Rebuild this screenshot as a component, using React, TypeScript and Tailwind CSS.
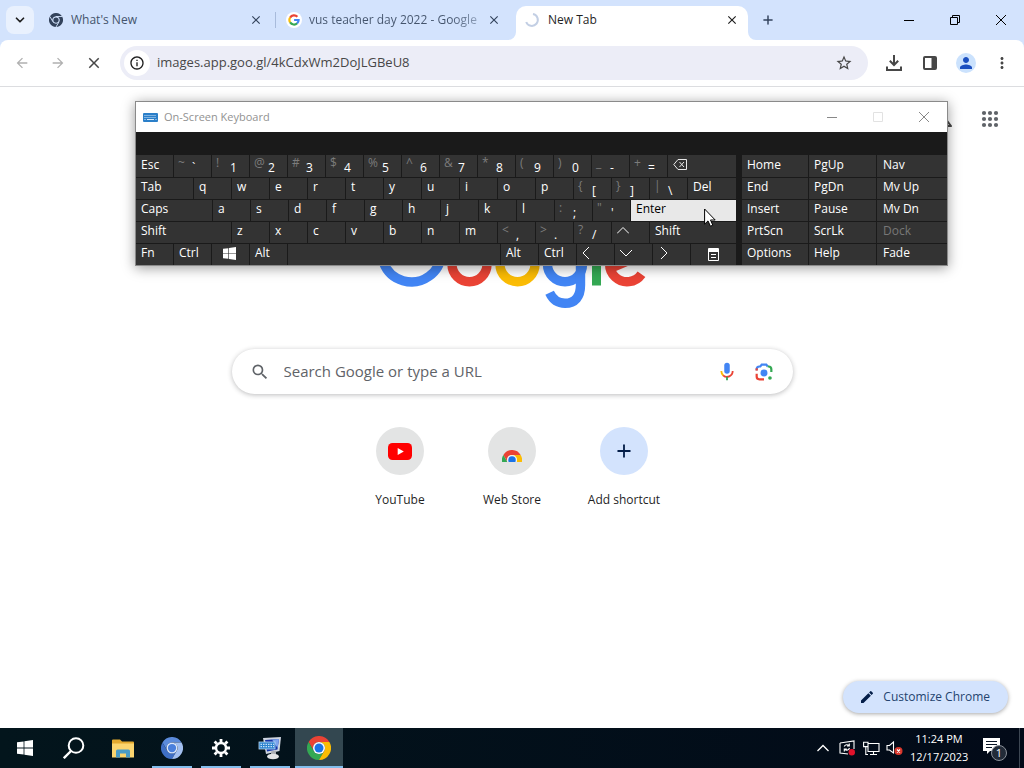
import type { ReactNode } from "react";
import {
  MdArrowBack,
  MdArrowForward,
  MdClose,
  MdEdit,
  MdMoreVert,
  MdOutlineInfo,
  MdOutlineScience,
  MdPerson,
  MdSearch,
  MdStarBorder,
} from "react-icons/md";
import { ChevronDown, Plus } from "lucide-react";

// ─── LOGOS ────────────────────────────────────────────────────────────────

type Ring = { a: string; b: string; c: string; ring: string; dot: string };

const chromeColors: Ring = { a: "#ea4335", b: "#34a853", c: "#fbbc04", ring: "#ffffff", dot: "#1a73e8" };
const chromiumColors: Ring = { a: "#5b8bdb", b: "#3f6fc4", c: "#a3c0f0", ring: "#dce8fb", dot: "#4a80dc" };
const monoColors: Ring = { a: "#33435c", b: "#33435c", c: "#33435c", ring: "#d3e3fd", dot: "#33435c" };

function ChromeMark({ colors, className, split }: { colors: Ring; className: string; split?: boolean }) {
  return (
    <svg viewBox="0 0 48 48" className={className} aria-hidden="true">
      <path d="M24 12H44.8A24 24 0 0 0 3.2 12L13.6 30A12 12 0 0 1 24 12Z" fill={colors.a} />
      <path d="M13.6 30 3.2 12A24 24 0 0 0 24 48L34.4 30A12 12 0 0 1 13.6 30Z" fill={colors.b} />
      <path d="M34.4 30 24 48A24 24 0 0 0 44.8 12H24A12 12 0 0 1 34.4 30Z" fill={colors.c} />
      {split && <path d="M24 12H45M13.6 30 3 12M34.4 30 24 48" stroke={colors.ring} strokeWidth="3" />}
      <circle cx="24" cy="24" r="12" fill={colors.ring} />
      <circle cx="24" cy="24" r="9" fill={colors.dot} />
    </svg>
  );
}

function GoogleG() {
  return (
    <svg viewBox="0 0 24 24" className="size-3" fill="none" strokeWidth="4.4" aria-hidden="true">
      <path d="M4.2 7.2A9.4 9.4 0 0 1 18.8 5.6" stroke="#ea4335" />
      <path d="M4.2 16.8A9.4 9.4 0 0 1 4.2 7.2" stroke="#fbbc04" />
      <path d="M18.4 18.6A9.4 9.4 0 0 1 4.2 16.8" stroke="#34a853" />
      <path d="M12.2 12H21.2A9.4 9.4 0 0 1 18.2 18.8" stroke="#4285f4" />
    </svg>
  );
}

function GoogleLogo() {
  return (
    <svg viewBox="0 0 272 92" className="h-[92px] w-[272px]" fill="none" strokeWidth="9.4" role="img" aria-label="Google">
      <path d="M57 14A30 30 0 1 0 65.5 36H35.5" stroke="#4285f4" />
      <circle cx="93.5" cy="47.2" r="17.5" stroke="#ea4335" />
      <circle cx="141.5" cy="47.2" r="17.5" stroke="#fbbc05" />
      <circle cx="189" cy="47.2" r="17.5" stroke="#4285f4" />
      <path d="M173.6 75.8C177 83 183 86.3 189 86.3C199 86.3 204.5 80 204.5 68V26" stroke="#4285f4" />
      <rect x="216" y="3" width="9" height="65.5" fill="#34a853" />
      <path d="M265.5 57.2A17.5 17.5 0 1 1 266 38L234 51.5" stroke="#ea4335" />
    </svg>
  );
}

function WindowsMark({ className }: { className: string }) {
  return (
    <svg viewBox="0 0 16 16" className={className} fill="currentColor" aria-hidden="true">
      <path d="M0 2.3 6.6 1.4V7.6H0ZM7.4 1.3 16 0V7.6H7.4ZM0 8.4H6.6V14.6L0 13.7ZM7.4 8.4H16V16L7.4 14.7Z" />
    </svg>
  );
}

// ─── TAB STRIP ────────────────────────────────────────────────────────────

function TabClose({ label, dark }: { label: string; dark?: boolean }) {
  return (
    <button aria-label={label} className="flex size-4 shrink-0 items-center justify-center">
      <MdClose className={dark ? "size-3.5 text-[#1f1f1f]" : "size-3.5 text-[#33435c]"} />
    </button>
  );
}

function TabStrip() {
  return (
    <div className="flex h-10 bg-[#d3e3fd] text-[12px] text-[#44546c]">
      <div className="w-10 shrink-0 p-1.5">
        <button aria-label="Search tabs" className="flex size-7 items-center justify-center rounded-lg bg-[#e9f1fe] text-[#1f1f1f]">
          <ChevronDown className="size-3.5" strokeWidth={3} />
        </button>
      </div>
      <div className="flex w-[235px] items-center pr-[11px] pl-[9px]">
        <ChromeMark colors={monoColors} className="mr-2 size-3.5 shrink-0" split />
        <span className="flex-1 truncate">What's New</span>
        <TabClose label="Close What's New" />
      </div>
      <div className="my-3 w-px bg-[#a8bbdb]" />
      <div className="flex w-[240px] items-center pr-[14px] pl-2.5">
        <span className="mr-[7px] flex size-4 shrink-0 items-center justify-center rounded-full bg-white">
          <GoogleG />
        </span>
        <span className="flex-1 bg-linear-to-r from-[#44546c] from-80% to-[#a9bad6] bg-clip-text whitespace-nowrap text-transparent">
          vus teacher day 2022 - Google
        </span>
        <TabClose label="Close vus teacher day 2022" />
      </div>
      <div className="relative mt-1.5 flex w-[232px] items-center rounded-t-[10px] bg-white px-2 pb-1.5 text-[#1f1f1f]">
        <svg viewBox="0 0 8 8" className="absolute bottom-0 -left-2 size-2" fill="#fff">
          <path d="M8 0V8H0A8 8 0 0 0 8 0Z" />
        </svg>
        <svg viewBox="0 0 8 8" className="absolute -right-2 bottom-0 size-2" fill="#fff">
          <path d="M0 0V8H8A8 8 0 0 1 0 0Z" />
        </svg>
        <svg viewBox="0 0 16 16" className="mr-2 size-4 shrink-0" fill="none" stroke="#c3cfe4" strokeWidth="2">
          <path d="M9 2A6 6 0 1 1 2.2 10" />
        </svg>
        <span className="flex-1">New Tab</span>
        <TabClose label="Close New Tab" dark />
      </div>
      <button aria-label="New tab" className="ml-3 flex w-4 items-center justify-center text-[#33435c]">
        <Plus className="size-3.5" strokeWidth={2.5} />
      </button>
      <div className="ml-auto flex text-black">
        <button aria-label="Minimize" className="flex w-[46px] items-center justify-center">
          <svg viewBox="0 0 10 10" className="size-2.5" stroke="currentColor"><path d="M0 5.5H10" /></svg>
        </button>
        <button aria-label="Restore" className="flex w-[46px] items-center justify-center">
          <svg viewBox="0 0 10 10" className="size-2.5" fill="none" stroke="currentColor"><path d="M.5 2.5H7.5V9.5H.5ZM2.5 2.5V.5H9.5V7.5H7.5" /></svg>
        </button>
        <button aria-label="Close window" className="flex w-[46px] items-center justify-center">
          <svg viewBox="0 0 10 10" className="size-2.5" stroke="currentColor"><path d="M0 0 10 10M10 0 0 10" /></svg>
        </button>
      </div>
    </div>
  );
}

function Toolbar() {
  return (
    <div className="bg-[#d3e3fd]">
      <div className="flex h-[47px] items-center rounded-t-lg border-b border-[#dcdde0] bg-white pr-1 pl-1 text-[#474747]">
        <button aria-label="Back" className="flex w-9 justify-center text-[#b0b0b0]"><MdArrowBack className="size-4" /></button>
        <button aria-label="Forward" className="flex w-9 justify-center text-[#b0b0b0]"><MdArrowForward className="size-4" /></button>
        <button aria-label="Stop loading" className="flex w-9 justify-center"><MdClose className="size-[18px]" /></button>
        <div className="ml-2 flex h-[34px] flex-1 items-center rounded-full bg-[#ecedf7] pr-[15px] pl-1">
          <button aria-label="View site information" className="flex size-[26px] items-center justify-center rounded-full bg-white">
            <MdOutlineInfo className="size-4 text-[#1f1f1f]" />
          </button>
          <input
            aria-label="Address"
            defaultValue="images.app.goo.gl/4kCdxWm2DoJLGBeU8"
            className="ml-[7px] min-w-0 flex-1 bg-transparent text-[13px] text-[#474747] outline-none"
          />
          <button aria-label="Bookmark this tab"><MdStarBorder className="size-[18px]" /></button>
        </div>
        <button aria-label="Downloads" className="ml-2 flex w-9 justify-center">
          <svg viewBox="0 0 18 18" className="size-[18px]" fill="none" stroke="currentColor" strokeWidth="2">
            <path d="M9 1V10.5M4.8 6.8 9 11 13.2 6.8M2 12.5V16H16V12.5" />
          </svg>
        </button>
        <button aria-label="Side panel" className="flex w-9 justify-center">
          <svg viewBox="0 0 16 16" className="size-4" fill="none" stroke="currentColor" strokeWidth="2">
            <rect x="2" y="2" width="12" height="12" rx="1" /><path d="M9.5 2H14V14H9.5Z" fill="currentColor" stroke="none" />
          </svg>
        </button>
        <button aria-label="Profile" className="flex w-9 justify-center">
          <span className="flex size-5 items-center justify-center rounded-full bg-[#cbe2fd]"><MdPerson className="size-[18px] text-[#1b4fc0]" /></span>
        </button>
        <button aria-label="Menu" className="flex w-9 justify-center"><MdMoreVert className="size-[18px]" /></button>
      </div>
    </div>
  );
}

// ─── NEW TAB PAGE ─────────────────────────────────────────────────────────

function MicIcon() {
  return (
    <svg viewBox="0 0 24 24" className="size-[22px]" fill="none" aria-hidden="true">
      <rect x="9" y="2" width="6" height="12" rx="3" fill="#4285f4" />
      <path d="M5.8 11A6.2 6.2 0 0 0 8 15.8" stroke="#fbbc04" strokeWidth="2" />
      <path d="M7.8 15.6A6.2 6.2 0 0 0 18.2 11" stroke="#ea4335" strokeWidth="2" />
      <path d="M12 17.2V21" stroke="#34a853" strokeWidth="2" />
    </svg>
  );
}

function LensIcon() {
  return (
    <svg viewBox="0 0 24 24" className="size-[22px]" fill="none" strokeWidth="2.4" aria-hidden="true">
      <path d="M4 10V9Q4 6 7 6H8L9.5 4H14.5L16 6" stroke="#4285f4" />
      <path d="M16 6H17Q20 6 20 9V12" stroke="#34a853" />
      <path d="M4 8V10.5" stroke="#ea4335" />
      <path d="M4 14V17Q4 20 7 20H12" stroke="#ea4335" />
      <circle cx="12" cy="13" r="3.8" fill="#4285f4" />
      <circle cx="18.5" cy="18.5" r="2" fill="#34a853" />
    </svg>
  );
}

function Shortcut({ label, tint, children }: { label: string; tint: string; children: ReactNode }) {
  return (
    <a href="#" className="flex w-28 flex-col items-center gap-4 text-[12px] leading-[18px] text-[#1f1f1f]">
      <span className={`flex size-12 items-center justify-center rounded-full ${tint}`}>{children}</span>
      {label}
    </a>
  );
}

function NewTabPage() {
  return (
    <main className="relative flex flex-1 flex-col items-center bg-white">
      <div className="flex w-full items-center justify-end gap-[26px] pt-5 pr-[25px] text-[#474747]">
        <MdOutlineScience className="size-6" />
        <button aria-label="Google apps">
          <svg viewBox="0 0 18 18" className="size-[18px]" fill="#5f6368">
            {[3, 9, 15].map((y) => [3, 9, 15].map((x) => <circle key={`${x}-${y}`} cx={x} cy={y} r="2.1" />))}
          </svg>
        </button>
      </div>
      <div className="mt-[86px]">
        <GoogleLogo />
      </div>
      <form className="mt-10 flex h-[45px] w-full max-w-[561px] items-center rounded-full bg-white px-[18px] shadow-[0_1px_5px_rgba(32,33,36,0.3)]">
        <MdSearch className="size-5 text-[#5f6368]" />
        <input
          aria-label="Search"
          placeholder="Search Google or type a URL"
          className="ml-3.5 min-w-0 flex-1 text-[15px] outline-none placeholder:text-[#5f6368]"
        />
        <button type="button" aria-label="Search by voice"><MicIcon /></button>
        <button type="button" aria-label="Search by image" className="ml-[15px]"><LensIcon /></button>
      </form>
      <div className="mt-[33px] flex">
        <Shortcut label="YouTube" tint="bg-[#e3e4e4]">
          <svg viewBox="0 0 24 17" className="w-6">
            <rect width="24" height="17" rx="4.5" fill="#f00" />
            <path d="M9.7 5V12L15.8 8.5Z" fill="#fff" />
          </svg>
        </Shortcut>
        <Shortcut label="Web Store" tint="bg-[#e3e4e4]">
          <span className="mt-2.5 h-3 w-5 overflow-hidden">
            <ChromeMark colors={{ ...chromeColors, ring: "#f1f1f1" }} className="size-5" />
          </span>
        </Shortcut>
        <Shortcut label="Add shortcut" tint="bg-[#d3e3fd]">
          <Plus className="size-5 text-[#041e49]" strokeWidth={2.2} />
        </Shortcut>
      </div>
      <div className="mt-auto flex w-full justify-end pr-4 pb-[15px]">
        <button className="flex h-8 items-center gap-2 rounded-full bg-[#d3e3fd] pr-[18px] pl-4 text-[12px] text-[#24436f] shadow-[0_1px_4px_rgba(0,0,0,0.35)]">
          <MdEdit className="size-4 text-[#041e49]" />
          Customize Chrome
        </button>
      </div>
    </main>
  );
}

// ─── ON-SCREEN KEYBOARD ───────────────────────────────────────────────────

const keyBase = "flex h-full items-center bg-[#333333] pl-[5px] text-left leading-4";

function Key({ children, width = "w-[37px]", label }: { children?: ReactNode; width?: string; label?: string }) {
  return (
    <button aria-label={label} className={`${keyBase} ${width} pb-[3px]`}>
      {children}
    </button>
  );
}

// Keys with a shifted symbol in the upper left corner
function DualKey({ pair }: { pair: string }) {
  return (
    <button className="flex h-full w-[37px] bg-[#333333] pl-1 text-left leading-4">
      <span className="w-3.5 text-[#7c7c7c]">{pair[0]}</span>
      <span className="pt-[5px]">{pair[1]}</span>
    </button>
  );
}

function Letters({ text }: { text: string }) {
  return (
    <>
      {text.split("").map((c) => (
        <Key key={c}>{c}</Key>
      ))}
    </>
  );
}

function Chevron({ d }: { d: string }) {
  return (
    <svg viewBox="0 0 12 12" className="size-3" fill="none" stroke="#fff">
      <path d={d} />
    </svg>
  );
}

const row = "flex h-[21px] gap-px";
const topRow = ["~`", "!1", "@2", "#3", "$4", "%5", "^6", "&7", "*8", "(9", ")0", "_-", "+="];
const sideKeys = [
  ["Home", "PgUp", "Nav"],
  ["End", "PgDn", "Mv Up"],
  ["Insert", "Pause", "Mv Dn"],
  ["PrtScn", "ScrLk", "Dock"],
  ["Options", "Help", "Fade"],
];

function OnScreenKeyboard() {
  return (
    <section
      aria-label="On-Screen Keyboard"
      className="absolute top-[101px] left-[135px] w-[813px] border border-[#8a8a8a] bg-[#1a1a1a] shadow-[0_2px_12px_rgba(0,0,0,0.4)]"
    >
      <header className="flex h-[30px] items-center bg-white pl-[7px] text-[11px] text-[#929292]">
        <svg viewBox="0 0 15 9" className="mr-1.5 h-[9px] w-[15px]">
          <rect width="15" height="9" rx="1" fill="#2b7fc9" />
          <path d="M1.5 2.5H13.5M1.5 4.5H13.5" stroke="#d5e9fa" strokeDasharray="1 1" />
          <path d="M1.5 6.5H2.5M4 6.5H11M12.5 6.5H13.5" stroke="#d5e9fa" />
        </svg>
        <h2 className="flex-1">On-Screen Keyboard</h2>
        <button aria-label="Minimize keyboard" className="flex w-[46px] justify-center">
          <svg viewBox="0 0 10 10" className="size-2.5" stroke="#888"><path d="M0 5.5H10" /></svg>
        </button>
        <button aria-label="Maximize keyboard" disabled className="flex w-[46px] justify-center">
          <svg viewBox="0 0 10 10" className="size-2.5" fill="none" stroke="#e2e2e2"><path d="M.5.5H9.5V9.5H.5Z" /></svg>
        </button>
        <button aria-label="Close keyboard" className="flex w-[46px] justify-center">
          <svg viewBox="0 0 10 10" className="size-2.5" stroke="#888"><path d="M0 0 10 10M10 0 0 10" /></svg>
        </button>
      </header>
      <div className="flex gap-1.5 pt-[23px] text-[12px] text-white">
        <div className="flex w-[600px] flex-col gap-px">
          <div className="flex h-[22px] gap-px">
            <Key>Esc</Key>
            {topRow.map((p) => <DualKey key={p} pair={p} />)}
            <Key label="Backspace" width="flex-1">
              <svg viewBox="0 0 14 11" className="w-3.5" fill="none" stroke="#e8e8e8">
                <path d="M5 .5H13.5V10.5H5L.8 5.5ZM6.5 3 11 8M11 3 6.5 8" />
              </svg>
            </Key>
          </div>
          <div className={row}>
            <Key width="w-[57px]">Tab</Key>
            <Letters text="qwertyuiop" />
            <DualKey pair="{[" />
            <DualKey pair="}]" />
            <DualKey pair="|\" />
            <Key width="flex-1">Del</Key>
          </div>
          <div className={row}>
            <Key width="w-[76px]">Caps</Key>
            <Letters text="asdfghjkl" />
            <DualKey pair=":;" />
            <DualKey pair={"\"'"} />
            <button className="flex flex-1 items-center bg-[#e8e8e8] pb-[3px] pl-[5px] leading-4 text-black">Enter</button>
          </div>
          <div className={row}>
            <Key width="w-[95px]">Shift</Key>
            <Letters text="zxcvbnm" />
            <DualKey pair="<," />
            <DualKey pair=">." />
            <DualKey pair="?/" />
            <Key label="Up"><Chevron d="M0 8.5 6 2.5 12 8.5" /></Key>
            <Key width="flex-1">Shift</Key>
          </div>
          <div className={row}>
            <Key>Fn</Key>
            <Key>Ctrl</Key>
            <Key label="Windows"><WindowsMark className="ml-1.5 size-[13px]" /></Key>
            <Key>Alt</Key>
            <Key label="Space" width="w-[212px]" />
            <Key>Alt</Key>
            <Key>Ctrl</Key>
            <Key label="Left"><Chevron d="M7 0 1 6 7 12" /></Key>
            <Key label="Down"><Chevron d="M0 3 6 9 12 3" /></Key>
            <Key label="Right"><Chevron d="M3 0 9 6 3 12" /></Key>
            <button aria-label="Menu key" className="flex flex-1 items-center justify-center bg-[#333333] pb-px">
              <svg viewBox="0 0 11 13" className="w-[11px]" fill="none" stroke="#fff">
                <path d="M.5.5H10.5V12.5H.5ZM.5 3.5H10.5M3 6.5H8M3 9.5H8" />
                <path d="M1 2H10" strokeWidth="2" />
              </svg>
            </button>
          </div>
        </div>
        <div className="flex flex-1 flex-col gap-px">
          {sideKeys.map((keys, i) => (
            <div key={keys[0]} className={i === 0 ? "flex h-[22px] gap-px" : row}>
              <Key width="w-[66px]">{keys[0]}</Key>
              <Key width="w-[67px]">{keys[1]}</Key>
              <Key width="flex-1">
                <span className={keys[2] === "Dock" ? "pl-px text-[#777]" : "pl-px"}>{keys[2]}</span>
              </Key>
            </div>
          ))}
        </div>
      </div>
    </section>
  );
}

function Cursor() {
  return (
    <svg viewBox="0 0 12 19" className="absolute top-[208px] left-[704px] w-3" fill="#fff" stroke="#000">
      <path d="M.6 1V16.2L4 12.9 6.4 18.2 8.8 17.2 6.5 12H11.2Z" />
    </svg>
  );
}

// ─── TASKBAR ──────────────────────────────────────────────────────────────

function Gear() {
  return (
    <svg viewBox="0 0 18 18" className="size-[18px]" fill="none" stroke="#fff">
      <circle cx="9" cy="9" r="5" strokeWidth="2.4" />
      <path
        d="M9 0V3M9 15V18M0 9H3M15 9H18M2.6 2.6 4.8 4.8M13.2 13.2 15.4 15.4M15.4 2.6 13.2 4.8M4.8 13.2 2.6 15.4"
        strokeWidth="2.8"
      />
    </svg>
  );
}

function TaskButton({ label, state, children }: { label: string; state?: "open" | "active"; children: ReactNode }) {
  return (
    <button
      aria-label={label}
      className={`flex w-12 flex-col items-center ${state === "active" ? "bg-[#334750]" : ""}`}
    >
      <span className="flex flex-1 items-center pt-0.5">{children}</span>
      <span
        className={`h-0.5 ${state === "active" ? "w-full bg-[#83bdec]" : state === "open" ? "w-10 bg-[#83bdec]" : "w-10"}`}
      />
    </button>
  );
}

function Taskbar() {
  return (
    <footer className="flex h-10 bg-linear-to-r from-[#03151c] to-[#020a18] text-white">
      <div className="flex gap-px pl-px">
        <TaskButton label="Start"><WindowsMark className="size-4" /></TaskButton>
        <TaskButton label="Search">
          <svg viewBox="0 0 22 22" className="size-[22px]" fill="none" stroke="#fff" strokeWidth="2">
            <circle cx="13" cy="8.5" r="7.3" /><path d="M8 14 .8 21.2" strokeWidth="2.4" />
          </svg>
        </TaskButton>
        <TaskButton label="File Explorer">
          <svg viewBox="0 0 22 19" className="w-[22px]">
            <path d="M0 1.5Q0 .5 1 .5H8L10 2.5H21Q22 2.5 22 3.5V18H0Z" fill="#e3a92f" />
            <path d="M0 4.5H22V18.5H0Z" fill="#fbd56f" />
            <path d="M4 18.5V12Q4 10.5 5.5 10.5H16.5Q18 10.5 18 12V18.5H14V14.5H8V18.5Z" fill="#4a9cc7" />
          </svg>
        </TaskButton>
        <TaskButton label="Chromium" state="open"><ChromeMark colors={chromiumColors} className="size-[22px]" /></TaskButton>
        <TaskButton label="Settings" state="open"><Gear /></TaskButton>
        <TaskButton label="On-Screen Keyboard" state="open">
          <svg viewBox="0 0 24 24" className="size-6">
            <path d="M5 2 23 1 21.5 15 8 18Z" fill="#cfd5e0" />
            <path d="M7 4 21 3 19.5 13.5 9 15.5Z" fill="#1637a8" />
            <path d="M14 3.5 21 3 19.5 12Z" fill="#7da4ee" />
            <rect x="1" y="6" width="16" height="7" fill="#2d83cf" stroke="#b9dcf8" strokeWidth=".8" />
            <path d="M2.5 8.3H16M2.5 10.7H16" stroke="#e9f5ff" strokeDasharray="1.5 1" />
            <path d="M13 15.5 18 14.5V20H13Z" fill="#a9acb3" />
            <ellipse cx="15" cy="20.5" rx="6" ry="2.8" fill="#e2e3e6" />
          </svg>
        </TaskButton>
        <TaskButton label="Google Chrome" state="active"><ChromeMark colors={chromeColors} className="size-6" /></TaskButton>
      </div>
      <div className="ml-auto flex items-center">
        <button aria-label="Show hidden icons" className="mr-2.5">
          <svg viewBox="0 0 12 8" className="w-3" fill="none" stroke="#fff" strokeWidth="1.3"><path d="M.5 7 6 1.5 11.5 7" /></svg>
        </button>
        <svg viewBox="0 0 17 16" className="mr-[7px] w-[17px]" fill="none" stroke="#fff" strokeWidth="1.1">
          <path d="M1 3 15 1V9M1 3V13L9 14" />
          <path d="M5.2 6.5A3 3 0 0 1 10 5.5M10.3 3.5V6H8M10.5 8A3 3 0 0 1 5.8 9.5M5.3 11.5V9H7.8" />
          <circle cx="12.8" cy="12.3" r="3.2" fill="#e0122b" stroke="none" />
        </svg>
        <svg viewBox="0 0 17 15" className="mr-1.5 w-[17px]" fill="none" stroke="#fff" strokeWidth="1.1">
          <path d="M5 2.5H16V10.5H5V6M10.5 10.5V13.5M7 13.5H14M.6 1.2H5V5.6H.6ZM2.8 5.6V13.5H5" />
        </svg>
        <svg viewBox="0 0 17 16" className="mr-[7px] w-[17px]" fill="none" stroke="#fff" strokeWidth="1.1">
          <path d="M1 5.5H3.5L7.5 2V13L3.5 10H1Z" />
          <circle cx="12.5" cy="11" r="4" fill="#d9372c" stroke="none" />
          <path d="M11 9.5 14 12.5M14 9.5 11 12.5" />
        </svg>
        <div className="w-[58px] text-center text-[11px] leading-[18px] whitespace-nowrap">
          <div>11:24 PM</div>
          <div>12/17/2023</div>
        </div>
        <button aria-label="Notifications, 1 new" className="relative mr-3.5 ml-[15px]">
          <svg viewBox="0 0 22 22" className="size-[22px]">
            <path d="M0 1H17V14H7L4 17V14H0Z" fill="#fff" />
            <path d="M3 4.5H14M3 7.5H14M3 10.5H9" stroke="#0a1626" />
          </svg>
          <span className="absolute top-2 left-2 flex size-4 items-center justify-center rounded-full border border-[#8a9099] bg-[#222b38] text-[11px]">
            1
          </span>
        </button>
        <span className="mr-1 h-10 w-px bg-[#3d4753]" />
      </div>
    </footer>
  );
}

export default function App() {
  return (
    <div className="relative flex min-h-screen flex-col overflow-hidden font-['Open_Sans','Noto_Sans',sans-serif]">
      <TabStrip />
      <Toolbar />
      <NewTabPage />
      <Taskbar />
      <OnScreenKeyboard />
      <Cursor />
    </div>
  );
}
